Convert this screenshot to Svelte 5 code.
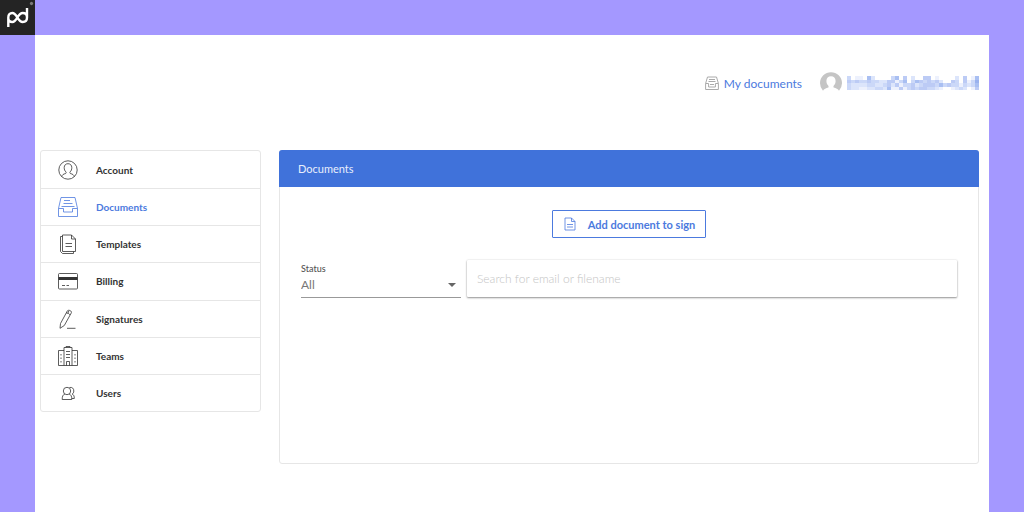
<script>
  const items = ['Account', 'Documents', 'Templates', 'Billing', 'Signatures', 'Teams', 'Users'];
  let current = $state('Documents');
  let query = $state('');
  let status = $state('All');

  // Each digit is the tint of one tile in the hidden account name.
  const mosaic = [
    '301105200003504020044010000204015',
    '434334332244135035434342004304136',
    '322223322342413342344435343313235',
    '322112233251141343443321001232014'
  ];
  const tints = ['#ffffff', '#edf1fd', '#dce5fb', '#cbd8f8', '#bccbf5', '#a9bff2', '#9ab2ee'];
</script>

{#snippet icon(name)}
  <svg class="icon" viewBox="0 0 20 20" aria-hidden="true">
    {#if name === 'Account'}
      <circle cx="10" cy="10" r="9.2" />
      <path d="M3.800 16.700c.2-2 1.600-2.500 3.800-3.200.7-.3.7-1 .3-1.600C6.700 10.800 6.200 9.400 6.200 7.600 6.200 5.200 7.700 3.700 10 3.700s3.800 1.500 3.800 3.900c0 1.800-.5 3.200-1.700 4.300-.4.6-.4 1.300.3 1.600 2.200.7 3.600 1.200 3.800 3.200" />
    {:else if name === 'Documents'}
      <path d="M.5 11.500 3 .5h14l2.500 11v8H.5zM.5 11.500h5v3.500h9v-3.500h5M3.500 9.500h13M6 3.500h6M5.500 6.500h9" />
    {:else if name === 'Templates'}
      <path d="M4.500 1h9l4 4v12.500h-13zM13.500 1v4h4M4.500 2.500h-2v15l2 2h11v-2M7.500 9.500H14M7.500 12.500H14" />
    {:else if name === 'Billing'}
      <rect x=".5" y="2.500" width="19" height="15.500" rx="1" />
      <path class="solid" d="M.5 6h19v3H.5z" />
      <path d="M4 14.500h3M8.500 14.500H11" />
    {:else if name === 'Signatures'}
      <path d="M2.500 14.500 9.300 2c.9-1.700 5-.2 4 1.900L6.300 16.500 2 19.300zM8.300 4c1.500 0 3 .7 3.700 1.900M9.800 4.500l1-2.500M9 19.300h8.500" />
    {:else if name === 'Teams'}
      <path d="M6 19.500V1.500h8v18M6 4.500H.5v15h19v-15H14M8.500 19.500v-4h3v4" />
      <path d="M8 1.500v-1h4v1M8 5.500h4M8 8.500h4M8 11.500h4" />
      <path stroke-dasharray="1.500 2" d="M3 8v10M17 8v10" />
    {:else}
      <circle cx="9" cy="8" r="3.700" />
      <path d="M6.800 11.100C5 11.800 4.200 13 4.200 16.500h9.600c0-3.500-.8-4.700-2.600-5.400M11.500 4.500c2.800-.6 4.300 1 4.300 3.500 0 1.500-.7 2.600-1.600 3.100 1.600.7 2.100 2 2.100 4.400h-2.500" />
    {/if}
  </svg>
{/snippet}

<div class="page">
  <header class="frame-top">
    <svg class="logo" viewBox="0 0 35 35" role="img" aria-label="pd">
      <rect width="35" height="35" fill="#242424" />
      <path d="M8.300 27V17.500c0-3 1.700-4.500 4-4.500 5 0 5 9 10.500 9 2.600 0 4.200-1.700 4.200-4.500V8M27 17.500c0-3-1.600-4.500-4.200-4.500-5.500 0-5.500 9-10.500 9-2.300 0-4-1.300-4-4" fill="none" stroke="#fff" stroke-width="2.400" />
      <circle cx="31.500" cy="3.500" r="1.200" fill="#777" stroke="#aaa" stroke-width=".5" />
    </svg>
  </header>

  <div class="sheet">
    <nav class="account" aria-label="Account menu">
      <a class="mydocs" href="#documents">
        <svg class="small-tray" viewBox="0 0 14 14" aria-hidden="true">
          <path d="M.6 7.500 2.500 1h9l1.900 6.500v6H.6zM.6 7.500h3V11h6.800V7.500h3M4 3.500h6M3.500 5.500h7M5 8.500h4" />
        </svg>
        My documents
      </a>
      <a class="profile" href="#account" aria-label="Profile">
        <svg class="avatar" viewBox="0 0 22 22" aria-hidden="true">
          <path fill="#c5c5c5" d="M3 18.700A11 11 0 1 1 19 18.700C18 16.700 16 16.300 13.700 15.500c-.5-.7-.3-1.500.3-2.200 1-1 1.600-2.500 1.600-4.300C15.600 6 13.800 4.300 11 4.300S6.400 6 6.400 9c0 1.800.6 3.300 1.600 4.300.6.7.8 1.500.3 2.200C6 16.300 4 16.700 3 18.700z" />
        </svg>
        <svg class="mosaic" viewBox="0 0 132 16" preserveAspectRatio="none" aria-hidden="true" shape-rendering="crispEdges">
          {#each mosaic as row, y}
            {#each row as tint, x}
              <rect x={x * 4} y={y * 4} width="4" height="4" fill={tints[tint]} />
            {/each}
          {/each}
        </svg>
      </a>
    </nav>

    <div class="columns">
      <nav aria-label="Settings">
        <ul class="menu">
          {#each items as item}
            <li>
              <a href="#{item.toLowerCase()}" class:active={current === item} onclick={() => (current = item)}>
                {@render icon(item)}
                {item}
              </a>
            </li>
          {/each}
        </ul>
      </nav>

      <main class="panel">
        <h1>Documents</h1>
        <div class="content">
          <button type="button" class="add">
            <svg class="file" viewBox="0 0 12 14" aria-hidden="true">
              <path d="M1 1h6.500L11 4.500V13H1zM7.500 1v3.500H11M3 7.500h6M3 10h6" />
            </svg>
            Add document to sign
          </button>
          <form class="filters" onsubmit={(e) => e.preventDefault()}>
            <div class="status">
              <label for="status">Status</label>
              <select id="status" bind:value={status}>
                <option>All</option>
              </select>
              <svg class="caret" viewBox="0 0 8 4" aria-hidden="true"><path d="M0 0h8L4 4z" /></svg>
            </div>
            <input type="search" aria-label="Search" placeholder="Search for email or filename" bind:value={query} />
          </form>
        </div>
      </main>
    </div>
  </div>
</div>

<style>
  :global(body) {
    margin: 0;
    background: #a498ff;
  }
  .page {
    min-height: 100vh;
    display: flex;
    flex-direction: column;
    font-family: Lato, sans-serif;
    color: #333;
  }
  .page, .page * {
    box-sizing: border-box;
  }
  .frame-top {
    height: 35px;
  }
  .logo {
    display: block;
    width: 35px;
    height: 35px;
  }
  .sheet {
    flex: 1;
    margin: 0 35px;
    padding: 36px 10px 24px 5px;
    background: #fff;
  }
  a {
    color: inherit;
    text-decoration: none;
  }
  .account {
    display: flex;
    justify-content: flex-end;
    align-items: center;
    gap: 18px;
    height: 24px;
  }
  .mydocs {
    display: flex;
    align-items: center;
    gap: 5px;
    font-size: 12px;
    color: #4c7ade;
  }
  .small-tray {
    width: 14px;
    height: 14px;
    fill: none;
    stroke: #aaa;
  }
  .profile {
    display: flex;
    align-items: center;
    gap: 5px;
  }
  .avatar {
    width: 22px;
    height: 22px;
  }
  .mosaic {
    width: 132px;
    height: 14px;
  }
  .columns {
    display: grid;
    grid-template-columns: 221px 1fr;
    gap: 18px;
    align-items: start;
    margin-top: 55px;
  }
  .menu {
    display: grid;
    grid-auto-rows: 1fr;
    min-height: 262px;
    margin: 0;
    padding: 0;
    list-style: none;
    border: 1px solid #e6e6e6;
    border-radius: 3px;
  }
  .menu li + li {
    border-top: 1px solid #e6e6e6;
  }
  .menu a {
    display: flex;
    align-items: center;
    gap: 18px;
    height: 100%;
    padding-left: 17px;
    font-size: 10px;
    font-weight: 700;
  }
  .menu .active {
    color: #4c7ade;
  }
  .icon {
    width: 20px;
    height: 20px;
    fill: none;
    stroke: currentColor;
    stroke-width: 0.8;
  }
  .icon .solid {
    fill: currentColor;
    stroke: none;
  }
  .panel {
    min-height: 314px;
    border: 1px solid #e6e6e6;
    border-radius: 3px;
  }
  h1 {
    margin: -1px -1px 0;
    padding: 0 19px;
    font-size: 11px;
    line-height: 37px;
    font-weight: 400;
    color: #e8eefc;
    background: #4072da;
    border-radius: 3px 3px 0 0;
  }
  .content {
    display: flex;
    flex-direction: column;
    align-items: center;
    gap: 22px;
    padding: 23px 21px;
  }
  .add {
    display: flex;
    align-items: center;
    gap: 12px;
    height: 28px;
    padding: 0 10px 0 11px;
    font: 700 11px Lato, sans-serif;
    color: #4c7ade;
    background: #fff;
    border: 1px solid #4c7ade;
    border-radius: 1px;
  }
  .file {
    width: 12px;
    height: 14px;
    fill: none;
    stroke: currentColor;
    stroke-width: 0.8;
  }
  .filters {
    display: grid;
    grid-template-columns: 160px 1fr;
    gap: 6px;
    width: 100%;
  }
  .status {
    position: relative;
    display: flex;
    flex-direction: column;
    height: 38px;
    padding-top: 3px;
    border-bottom: 1px solid #999;
  }
  .status label {
    font-size: 9px;
    line-height: 12px;
    font-weight: 500;
    color: #555;
  }
  .status select {
    width: 100%;
    height: 18px;
    padding: 0;
    appearance: none;
    border: 0;
    background: transparent;
    font: 400 12px Lato, sans-serif;
    color: #777;
  }
  .caret {
    position: absolute;
    right: 5px;
    bottom: 10px;
    width: 8px;
    height: 4px;
    fill: #666;
    pointer-events: none;
  }
  input {
    width: 100%;
    height: 37px;
    padding: 0 10px;
    border: 0;
    border-radius: 1px;
    box-shadow: 0 1px 2px #0006, 0 0 2px #0002;
    font: 300 12px Lato, sans-serif;
    color: #555;
    appearance: none;
  }
  input::placeholder {
    color: #c4c4c4;
    opacity: 1;
  }
</style>
